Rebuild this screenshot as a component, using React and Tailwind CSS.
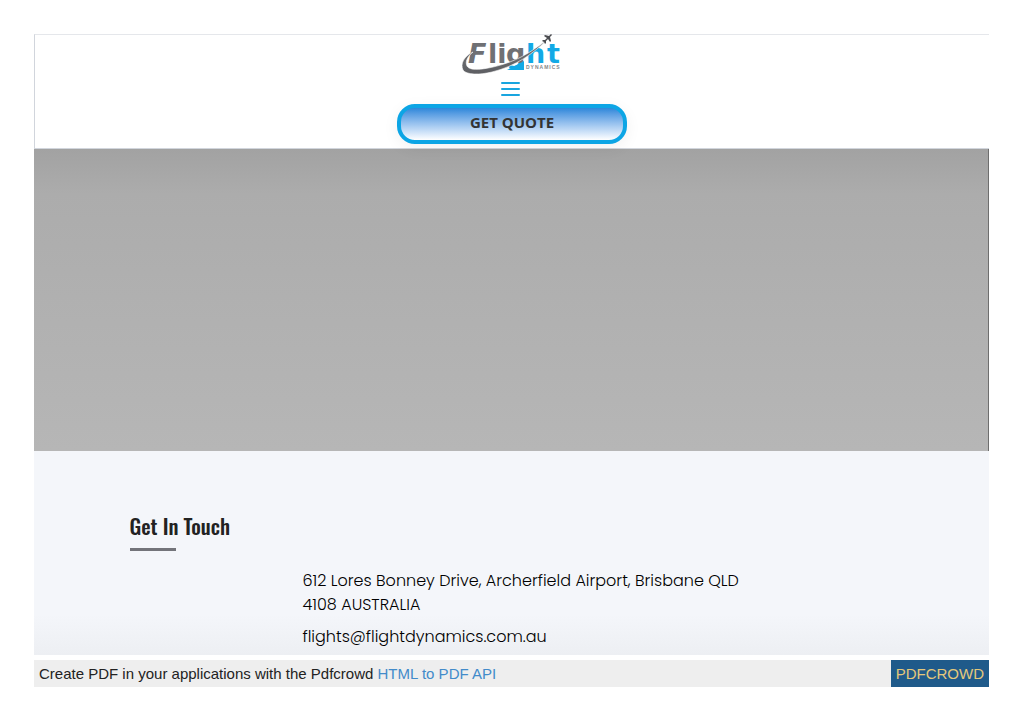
function Logo() {
  return (
    <svg width="104" height="42" viewBox="0 0 104 42" role="img" aria-label="Flight Dynamics">
      <defs>
        <linearGradient id="steel" x1="0" y1="0" x2="0" y2="1">
          <stop offset="0" stopColor="#77787c" />
          <stop offset="1" stopColor="#5d5e62" />
        </linearGradient>
        <linearGradient id="tail" gradientUnits="userSpaceOnUse" x1="0" y1="0" x2="0" y2="42">
          <stop offset="0.68" stopColor="#6f7074" />
          <stop offset="0.68" stopColor="#12a9e6" />
        </linearGradient>
      </defs>
      <text
        x="8"
        y="29"
        fontSize="27"
        fontWeight="700"
        fill="#6f7074"
        className="font-['DejaVu_Sans',sans-serif]"
      >
        <tspan fontStyle="italic">F</tspan>
        <tspan x="28">li</tspan>
        <tspan x="46" fill="url(#tail)">
          g
        </tspan>
        <tspan x="66" fill="#12a9e6">
          h
        </tspan>
        <tspan x="87" fill="#12a9e6">
          t
        </tspan>
      </text>
      <path d="M47 36L64 27v9z" fill="#12a9e6" />
      <text
        x="66"
        y="35"
        fontSize="5"
        fontWeight="700"
        letterSpacing="1"
        fill="#85868a"
        className="font-['Liberation_Sans',sans-serif]"
      >
        DYNAMICS
      </text>
      {/* Swoosh and plane */}
      <path
        d="M13 18C4 22 0 30 3 36C6 41 20 41 32 38C56 32 73 20 89 4C73 17 60 25 44 30C28 35 10 38 7 32C5 28 7 23 13 18z"
        fill="url(#steel)"
        stroke="#fff"
        strokeWidth="0.6"
      />
      <path
        d="M91 0l-2 2-4-1-1 1 3 2-2 2-2 0-1 1 2 1 1 2 1-1v-2l2-2 2 3 1-1-1-4 2-2z"
        fill="#4b4c50"
      />
    </svg>
  );
}

function Header() {
  return (
    <header className="flex h-[115px] flex-col items-center border-t border-b border-l border-t-gray-200 border-b-gray-300 border-l-gray-300 bg-white">
      <a href="#home" className="-mt-px block">
        <Logo />
      </a>
      <button type="button" aria-label="Open menu" className="flex h-[26px] w-8 items-center justify-center">
        <svg width="22" height="16" viewBox="0 0 22 16" stroke="#19a5df" strokeWidth="2" strokeLinecap="round">
          <path d="M1 2h17M1 8h17M1 14h17" />
        </svg>
      </button>
      <button
        type="button"
        className="mt-[2px] h-10 w-[230px] rounded-[18px] border-4 border-[#0ca5e5] bg-linear-to-b from-[#2b87da] to-white pb-1 font-['Open_Sans',sans-serif] text-[15px] leading-5 font-bold text-[#333] shadow-[0_4px_16px_rgba(0,0,0,0.06)]"
      >
        GET QUOTE
      </button>
    </header>
  );
}

function Contact() {
  return (
    <section className="h-[204px] bg-[#f4f6fa] bg-linear-to-b from-transparent from-80% to-[#edeff3] px-[10%] pt-[61px]">
      <h2 className="font-['Oswald','Roboto_Condensed',sans-serif] text-[21px] leading-7 font-medium text-[#222]">
        Get In Touch
      </h2>
      <div className="mt-2 h-[3px] w-[46px] bg-[#73747a]" />
      <address className="ml-[173px] pt-[18px] font-['Poppins','Inter',sans-serif] text-base leading-6 font-light text-black not-italic">
        <p className="max-w-[470px]">612 Lores Bonney Drive, Archerfield Airport, Brisbane QLD 4108 AUSTRALIA</p>
        <p className="mt-2">flights@flightdynamics.com.au</p>
      </address>
    </section>
  );
}

function PdfBar() {
  return (
    <footer className="mt-[5px] flex items-stretch justify-between bg-[#eee] font-['Liberation_Sans',sans-serif] text-[15px] leading-[27px] text-[#222]">
      <p className="pl-[5px]">
        Create PDF in your applications with the Pdfcrowd{' '}
        <a href="#api" className="text-[#428bca]">
          HTML to PDF API
        </a>
      </p>
      <a href="#pdfcrowd" className="bg-[#1f5a8a] px-[5px] text-[#e5c87b]">
        PDFCROWD
      </a>
    </footer>
  );
}

export default function App() {
  return (
    <div className="bg-white p-[34px]">
      <Header />
      <div className="h-[302px] border-r border-[#6e6e6e] bg-linear-to-b from-[#a2a2a2] via-[#acacac] via-15% to-[#b6b6b6]" />
      <Contact />
      <PdfBar />
    </div>
  );
}
